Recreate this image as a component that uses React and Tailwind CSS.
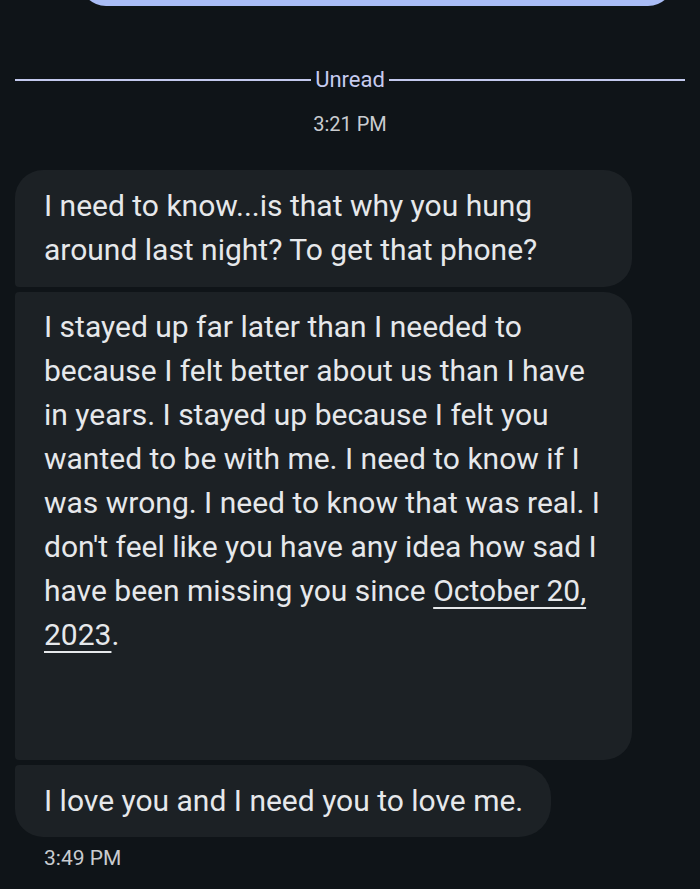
import React from "react";

const Bubble = ({ lines, className }) => (
  <div className={`bg-[#1c2125] pl-[29px] pr-[28px] ${className}`}>
    {lines.map((line, i) => (
      <div key={i} className="h-[44px] leading-[44px] whitespace-nowrap">
        {line}
      </div>
    ))}
  </div>
);

const Link = ({ children }) => (
  <span className="underline decoration-[2px] underline-offset-[6px]">{children}</span>
);

export default function App() {
  return (
    <div
      className="w-[700px] h-[889px] overflow-hidden bg-[#0f1418] text-[#e6e8eb]"
      style={{ fontFamily: "Roboto, 'Noto Sans', sans-serif" }}
    >
      {/* previous outgoing bubble, cut off at top */}
      <div className="ml-[80px] mr-[26px] -mt-[30px] h-[36px] rounded-b-[26px] bg-[#aabdf6]" />

      {/* unread divider */}
      <div className="mt-[60px] flex items-center px-[15px]">
        <div className="h-[2px] flex-1 bg-[#c3c9ee]" />
        <span className="px-[4px] text-[22px] leading-[28px] text-[#c6cbef]">Unread</span>
        <div className="h-[2px] flex-1 bg-[#c3c9ee]" />
      </div>

      <div className="mt-[16px] text-center text-[20px] leading-[28px] text-[#c9ccd0]">3:21 PM</div>

      <div className="mt-[32px] flex flex-col gap-[5px] pl-[15px] text-[30px]">
        <Bubble
          className="w-[617px] h-[117px] pt-[14px] rounded-tl-[28px] rounded-r-[28px] rounded-bl-[4px]"
          lines={["I need to know...is that why you hung", "around last night? To get that phone?"]}
        />
        <Bubble
          className="w-[617px] h-[468px] pt-[13px] rounded-l-[4px] rounded-r-[28px]"
          lines={[
            "I stayed up far later than I needed to",
            "because I felt better about us than I have",
            "in years. I stayed up because I felt you",
            "wanted to be with me. I need to know if I",
            "was wrong. I need to know that was real. I",
            "don't feel like you have any idea how sad I",
            <>
              have been missing you since <Link>October 20,</Link>
            </>,
            <>
              <Link>2023</Link>.
            </>,
          ]}
        />
        <Bubble
          className="self-start h-[72px] pt-[14px] rounded-tl-[4px] rounded-bl-[28px] rounded-r-[32px]"
          lines={["I love you and I need you to love me."]}
        />
      </div>

      <div className="mt-[7px] pl-[44px] text-[21px] leading-[28px] text-[#c9ccd0]">3:49 PM</div>
    </div>
  );
}
